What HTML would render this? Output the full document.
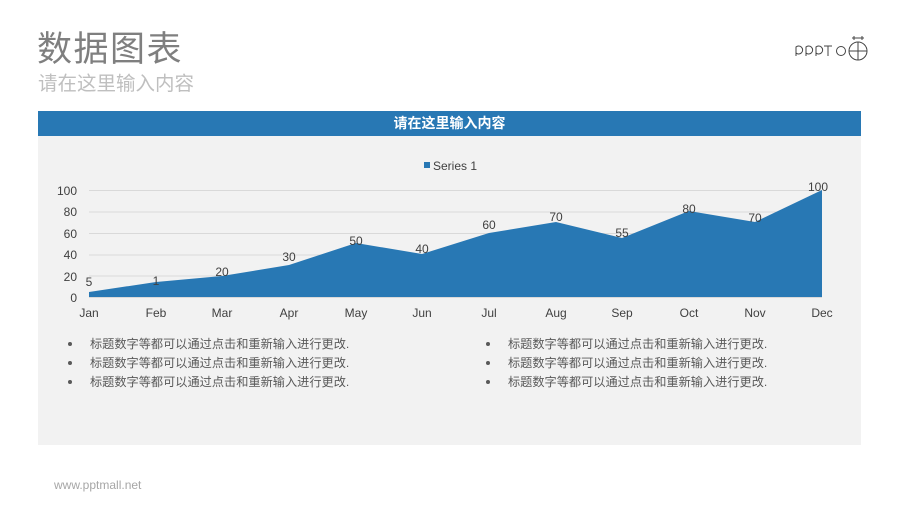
<!DOCTYPE html>
<html><head><meta charset="utf-8"><style>
body{margin:0;width:900px;height:506px;background:#fff;position:relative;overflow:hidden;font-family:"Liberation Sans","Noto Sans CJK SC",sans-serif}
.t1{position:absolute;left:37px;top:30px;font-size:35px;color:#7f7f7f;line-height:40px;letter-spacing:1.5px}
.t2{position:absolute;left:38px;top:73px;font-size:19.5px;color:#bfbfbf;line-height:22px}
.bar{position:absolute;left:38px;top:111px;width:823px;height:25px;background:#2878b4;color:#fff;font-weight:bold;font-size:14px;text-align:center;line-height:25px}
.panel{position:absolute;left:38px;top:136px;width:823px;height:309px;background:#f2f2f2}
.foot{position:absolute;left:54px;top:478px;font-size:12px;color:#a6a6a6}
ul{position:absolute;margin:0;padding:0;list-style:none;font-size:12.2px;color:#595959}
li{height:19px;line-height:19px;position:relative;padding-left:22px}
li:before{content:"";position:absolute;left:0;top:7px;width:4px;height:4px;border-radius:2px;background:#595959}
</style></head><body>
<div class="t1">数据图表</div>
<div class="t2">请在这里输入内容</div>
<svg style="position:absolute;left:790px;top:34px" width="80" height="32">
<g fill="none" stroke="#444" stroke-width="1">
<path d="M6 22V13a4 4 0 1 1 0 6M16 22V13a4 4 0 1 1 0 6M26 22V13a4 4 0 1 1 0 6"/>
<path d="M34 12h8M38 12v10"/>
<circle cx="51" cy="17" r="4.5"/>
<circle cx="68" cy="17" r="9"/>
<path d="M59 17h18M68 8v18M62 4h12M64 2v4M72 2v4"/>
</g></svg>
<div class="bar">请在这里输入内容</div>
<div class="panel"></div>
<svg style="position:absolute;left:0;top:0" width="900" height="506" font-family="Liberation Sans, sans-serif" font-size="12" fill="#404040">
<g stroke="#d9d9d9" stroke-width="1">
<path d="M89 190.5H822M89 212H822M89 233.5H822M89 255H822M89 276H822"/>
</g>
<polygon fill="#2878b4" points="89,297 89,292 156,282 222,276 289,265 356,243 422,254 489,233 556,222 622,238 689,211 755,222 822,190 822,297"/>
<path d="M89 297.5H822" stroke="#d9d9d9"/>
<rect x="424" y="162" width="6" height="6" fill="#2878b4"/>
<text x="433" y="170">Series 1</text>
<g text-anchor="end"><text x="77" y="195">100</text><text x="77" y="216">80</text><text x="77" y="238">60</text><text x="77" y="259">40</text><text x="77" y="281">20</text><text x="77" y="302">0</text></g>
<g text-anchor="middle">
<text x="89" y="317">Jan</text><text x="156" y="317">Feb</text><text x="222" y="317">Mar</text><text x="289" y="317">Apr</text><text x="356" y="317">May</text><text x="422" y="317">Jun</text><text x="489" y="317">Jul</text><text x="556" y="317">Aug</text><text x="622" y="317">Sep</text><text x="689" y="317">Oct</text><text x="755" y="317">Nov</text><text x="822" y="317">Dec</text>
<text x="89" y="286">5</text><text x="156" y="285">1</text><text x="222" y="276">20</text><text x="289" y="261">30</text><text x="356" y="245">50</text><text x="422" y="253">40</text><text x="489" y="229">60</text><text x="556" y="221">70</text><text x="622" y="237">55</text><text x="689" y="213">80</text><text x="755" y="222">70</text><text x="818" y="191">100</text>
</g></svg>
<ul style="left:68px;top:335px"><li>标题数字等都可以通过点击和重新输入进行更改.</li><li>标题数字等都可以通过点击和重新输入进行更改.</li><li>标题数字等都可以通过点击和重新输入进行更改.</li></ul>
<ul style="left:486px;top:335px"><li>标题数字等都可以通过点击和重新输入进行更改.</li><li>标题数字等都可以通过点击和重新输入进行更改.</li><li>标题数字等都可以通过点击和重新输入进行更改.</li></ul>
<div class="foot">www.pptmall.net</div>
</body></html>
